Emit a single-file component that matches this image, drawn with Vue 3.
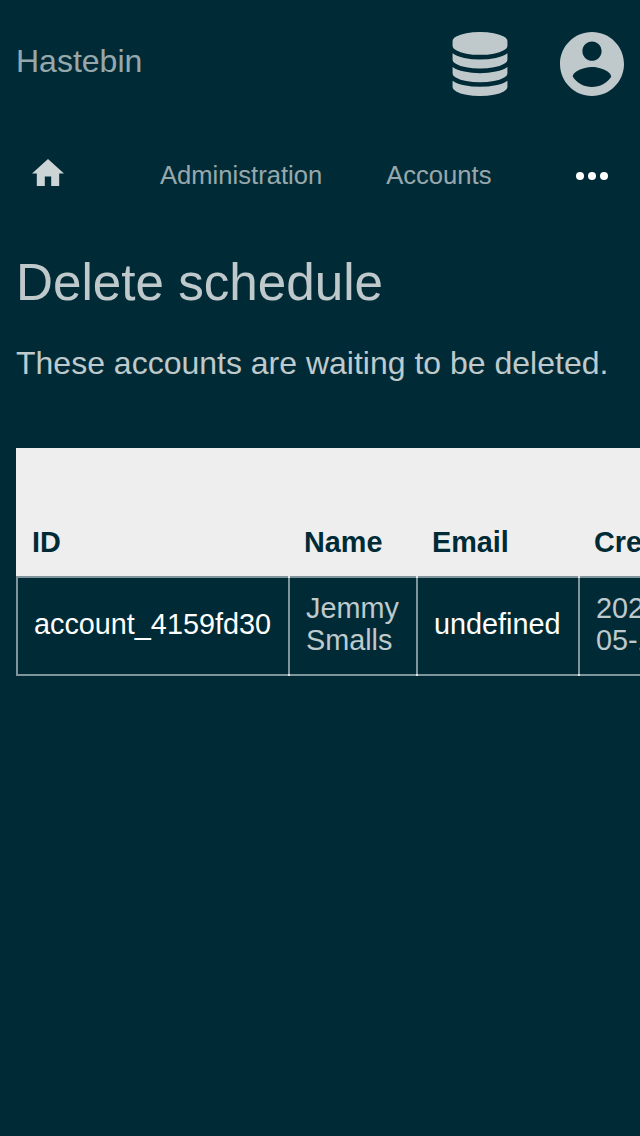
<script setup>
const columns = ['ID', 'Name', 'Email', 'Created']
const rows = [
  [
    { text: 'account_4159fd30', link: true },
    { text: 'Jemmy Smalls' },
    { text: 'undefined', link: true },
    { text: '2022-05-15' },
  ],
]
</script>

<template>
  <div class="page">
    <header class="topbar">
      <span class="brand">Hastebin</span>
      <div class="actions">
        <svg class="icon" viewBox="-64 0 1792 1792">
          <path d="M832 768q237 0 443-43t325-127v170q0 69-103 128t-280 93.5-385 34.5-385-34.5-280-93.5-103-128v-170q119 84 325 127t443 43zm0 768q237 0 443-43t325-127v170q0 69-103 128t-280 93.5-385 34.5-385-34.5-280-93.5-103-128v-170q119 84 325 127t443 43zm0-384q237 0 443-43t325-127v170q0 69-103 128t-280 93.5-385 34.5-385-34.5-280-93.5-103-128v-170q119 84 325 127t443 43zm0-1152q208 0 385 34.5t280 93.5 103 128v128q0 69-103 128t-280 93.5-385 34.5-385-34.5-280-93.5-103-128v-128q0-69 103-128t280-93.5 385-34.5z" />
        </svg>
        <svg class="icon" viewBox="2 2 20 20">
          <path d="M12 2C6.48 2 2 6.48 2 12s4.480 10 10 10 10-4.480 10-10S17.520 2 12 2zm0 3c1.660 0 3 1.340 3 3s-1.340 3-3 3-3-1.340-3-3 1.340-3 3-3zm0 14.200c-2.500 0-4.710-1.280-6-3.220.030-1.990 4-3.080 6-3.080 1.990 0 5.970 1.090 6 3.080-1.290 1.940-3.500 3.220-6 3.220z" />
        </svg>
      </div>
    </header>

    <nav class="nav">
      <svg class="home" viewBox="2 3 20 17"><path d="M10 20v-6h4v6h5v-8h3L12 3 2 12h3v8z" /></svg>
      <a class="admin">Administration</a>
      <a class="accounts">Accounts</a>
      <span class="more"><i></i><i></i><i></i></span>
    </nav>

    <main>
      <h1>Delete schedule</h1>
      <p>These accounts are waiting to be deleted.</p>
      <div class="table">
        <div class="head">
          <div v-for="c in columns" :key="c" class="th">{{ c }}</div>
        </div>
        <div v-for="(row, i) in rows" :key="i" class="row">
          <div v-for="(cell, j) in row" :key="j" class="td" :class="{ link: cell.link }">
            <span>{{ cell.text }}</span>
          </div>
        </div>
      </div>
    </main>
  </div>
</template>

<style>
body {
  background: #002b36;
}
</style>

<style scoped>
.page {
  box-sizing: border-box;
  width: 640px;
  height: 1136px;
  padding: 32px 0 0 16px;
  overflow: hidden;
  background: #002b36;
  color: rgba(255, 255, 255, 0.75);
  font-family: "Liberation Sans", Arial, sans-serif;
}
.topbar {
  display: flex;
  justify-content: space-between;
  height: 64px;
  padding-right: 16px;
}
.brand {
  font-size: 32px;
  line-height: 58px;
  color: rgba(255, 255, 255, 0.6);
}
.actions {
  display: flex;
  gap: 48px;
}
.icon {
  width: 64px;
  height: 64px;
  fill: rgba(255, 255, 255, 0.75);
}
.nav {
  display: flex;
  align-items: center;
  height: 32px;
  margin-top: 64px;
  padding: 0 32px 0 16px;
  font-size: 25.6px;
  line-height: 30px;
  color: rgba(255, 255, 255, 0.6);
}
.home {
  width: 32px;
  height: 27.2px;
  margin-top: -7.2px;
  fill: rgba(255, 255, 255, 0.8);
}
.admin,
.accounts {
  padding-bottom: 2px;
}
.admin {
  margin-left: 96px;
}
.accounts {
  margin-left: 64px;
}
.more {
  display: flex;
  gap: 4px;
  margin-left: auto;
}
.more i {
  width: 8px;
  height: 8px;
  border-radius: 50%;
  background: #fff;
}
h1 {
  margin: 61px 0 0;
  font-size: 51.2px;
  font-weight: 400;
  line-height: 60px;
}
p {
  margin: 31px 0 0;
  font-size: 32px;
  line-height: 38px;
}
.table {
  width: 699px;
  margin-top: 66px;
  font-size: 28.8px;
  line-height: 32px;
}
.head,
.row {
  display: grid;
  grid-template-columns: 272px 128px 162px 137px;
}
.head {
  height: 128px;
  align-items: end;
  background: #eee;
  color: #002b36;
  font-weight: 700;
}
.th {
  padding: 0 16px 18px;
}
.row {
  height: 100px;
}
.td {
  position: relative;
  display: flex;
  align-items: center;
  padding: 0 12px 4px 16px;
  border-left: 2px solid rgba(255, 255, 255, 0.5);
}
/* horizontal rules run across the neighbouring column line, as collapsed borders do */
.td::after {
  content: "";
  position: absolute;
  inset: 0 -2px 0 -2px;
  border: solid rgba(255, 255, 255, 0.5);
  border-width: 2px 0;
}
.td:first-child::after {
  left: 0;
}
.link {
  color: #fff;
}
</style>
